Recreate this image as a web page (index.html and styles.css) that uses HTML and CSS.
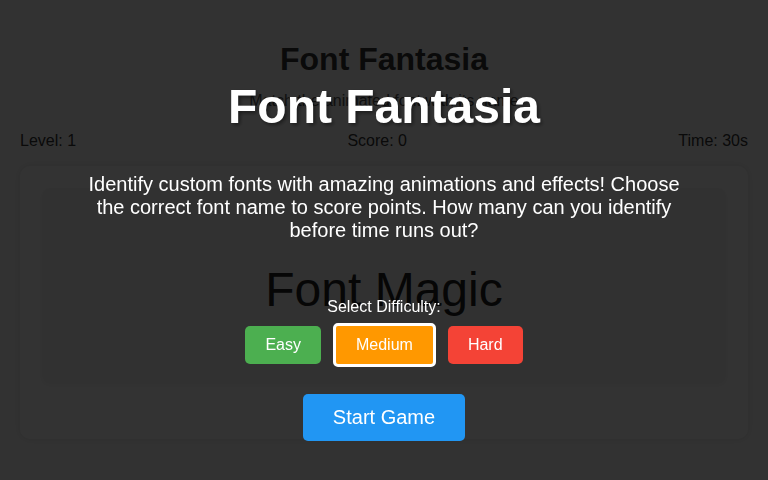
FILE: index.html
```html
<!DOCTYPE html>
<html lang="en">
<head>
<meta charset="utf-8">
<title>Font Fantasia</title>
<link rel="stylesheet" href="styles.css">
</head>
<body>
<div class="page">
  <h1 class="title">Font Fantasia</h1>
  <p class="subtitle">Match the animated font with its name</p>
  <div class="stats">
    <span>Level: 1</span>
    <span>Score: 0</span>
    <span>Time: 30s</span>
  </div>
  <div class="game-card">
    <div class="font-display">
      <span class="font-sample">Font Magic</span>
    </div>
    <div class="options"></div>
  </div>
</div>

<div class="overlay">
  <h1 class="overlay-title">Font Fantasia</h1>
  <p class="overlay-text">Identify custom fonts with amazing animations and effects! Choose the correct font name to score points. How many can you identify before time runs out?</p>
  <div class="difficulty-label">Select Difficulty:</div>
  <div class="difficulty">
    <button class="diff-btn easy">Easy</button>
    <button class="diff-btn medium selected">Medium</button>
    <button class="diff-btn hard">Hard</button>
  </div>
  <button class="start-btn">Start Game</button>
</div>
</body>
</html>
```
FILE: styles.css
```css
html, body {
  margin: 0;
  padding: 0;
}

body {
  background: #fbfbfb;
  font-family: "Liberation Sans", Arial, sans-serif;
  color: #333;
  height: 480px;
  overflow: hidden;
}

.page {
  padding: 20px;
}

.title {
  font-size: 32px;
  font-weight: bold;
  text-align: center;
  margin: 21px 0 14px;
  line-height: normal;
}

.subtitle {
  font-size: 16px;
  text-align: center;
  margin: 0 0 22px;
  color: #555;
}

.stats {
  display: flex;
  justify-content: space-between;
  font-size: 16px;
}

.game-card {
  margin-top: 16px;
  background: #fff;
  border-radius: 10px;
  box-shadow: 0 0 10px rgba(0, 0, 0, 0.12);
  padding: 22px;
}

.font-display {
  height: 195px;
  box-sizing: border-box;
  padding-top: 8px;
  display: flex;
  align-items: center;
  justify-content: center;
  background: #f6f6f6;
  border-radius: 8px;
  box-shadow: 0 2px 6px rgba(0, 0, 0, 0.06);
}

.font-sample {
  font-size: 48px;
  color: #222;
}

.options {
  height: 34px;
}

.overlay {
  position: fixed;
  inset: 0;
  background: rgba(0, 0, 0, 0.8);
  color: #fff;
  display: flex;
  flex-direction: column;
  align-items: center;
  text-align: center;
  padding-top: 79px;
  box-sizing: border-box;
}

.overlay-title {
  font-size: 48px;
  font-weight: bold;
  margin: 0 0 39px;
  line-height: normal;
  text-shadow: 2px 2px 4px rgba(0, 0, 0, 0.5);
}

.overlay-text {
  font-size: 20px;
  line-height: 23px;
  max-width: 600px;
  margin: 0 0 56px;
}

.difficulty-label {
  font-size: 16px;
  margin-bottom: 7px;
}

.difficulty {
  display: flex;
  align-items: center;
  gap: 12px;
}

.diff-btn {
  font-family: "Liberation Sans", Arial, sans-serif;
  font-size: 16px;
  line-height: 18px;
  color: #fff;
  border: none;
  border-radius: 5px;
  padding: 10px 20px;
}

.easy { background: #4caf50; }
.medium { background: #ff9800; }
.hard { background: #f44336; }

.selected {
  border: 3px solid #fff;
}

.start-btn {
  margin-top: 27px;
  font-family: "Liberation Sans", Arial, sans-serif;
  font-size: 20px;
  line-height: 23px;
  color: #fff;
  background: #2196f3;
  border: none;
  border-radius: 5px;
  padding: 12px 30px;
}
```
